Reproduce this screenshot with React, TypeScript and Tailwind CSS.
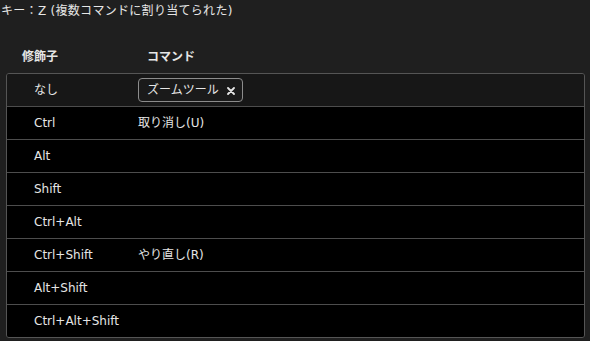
import React from "react";

const rows: { mod: string; cmd?: string; chip?: boolean }[] = [
  { mod: "なし", cmd: "ズームツール", chip: true },
  { mod: "Ctrl", cmd: "取り消し(U)" },
  { mod: "Alt" },
  { mod: "Shift" },
  { mod: "Ctrl+Alt" },
  { mod: "Ctrl+Shift", cmd: "やり直し(R)" },
  { mod: "Alt+Shift" },
  { mod: "Ctrl+Alt+Shift" },
];

export default function App() {
  return (
    <div
      className="w-[590px] h-[341px] bg-[#1f1f1f] text-[#e6e6e6] overflow-hidden"
      style={{ fontFamily: '"DejaVu Sans", "Noto Sans CJK JP", sans-serif' }}
    >
      <div className="h-[24px] pl-[1px] text-[12px] leading-[23px] tracking-[0.3px]">キー：Z (複数コマンドに割り当てられた)</div>
      <div className="flex h-[49px] items-center pt-[17px] text-[12px] font-bold">
        <div className="w-[147px] pl-[22px]">修飾子</div>
        <div>コマンド</div>
      </div>
      <div className="mx-[6px] mr-[5px] border border-[#555] rounded-[3px] overflow-hidden">
        {rows.map((r, i) => (
          <div
            key={i}
            className={`flex items-center text-[12px] leading-[16px] ${i === 0 ? "bg-[#171717] h-[32px]" : "h-[33px] bg-black border-t border-[#4d4d4d] pb-[1px]"}`}
          >
            <div className="w-[131px] pl-[27px]">{r.mod}</div>
            {r.chip ? (
              <div className="flex h-[24px] items-center gap-[8px] rounded-[4px] border border-[#8c8c8c] bg-[#1a1a1a] pl-[8px] pr-[7px]">
                <span>{r.cmd}</span>
                <svg width="8" height="8" viewBox="0 0 8 8" className="mt-[1px]">
                  <path d="M1 1 L7 7 M7 1 L1 7" stroke="#e6e6e6" strokeWidth="1.8" strokeLinecap="round" />
                </svg>
              </div>
            ) : (
              <div>{r.cmd}</div>
            )}
          </div>
        ))}
      </div>
    </div>
  );
}
